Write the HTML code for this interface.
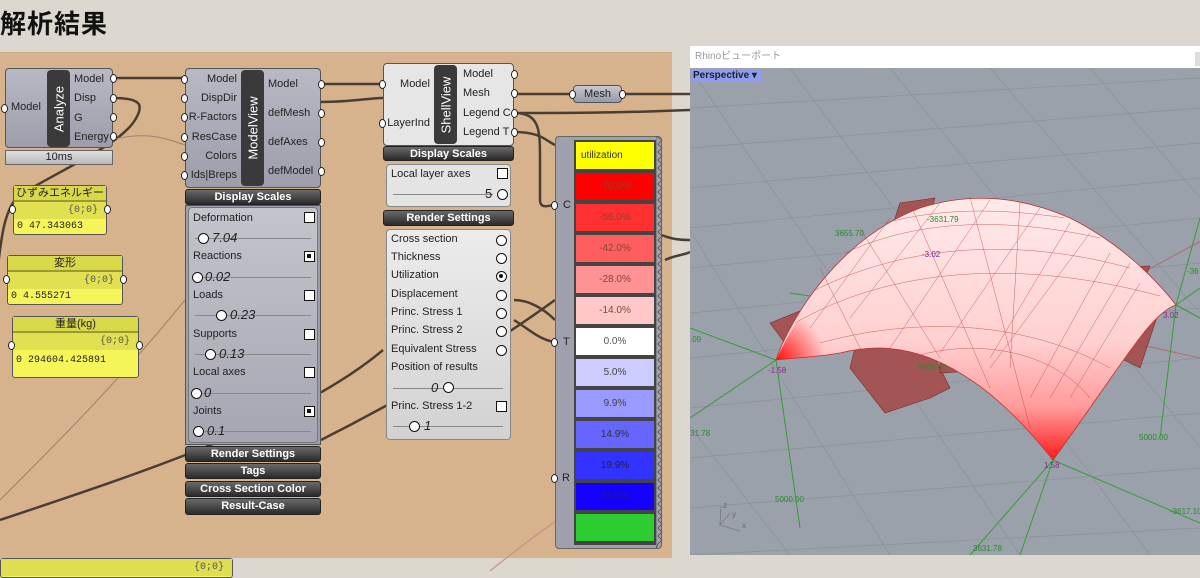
<!DOCTYPE html>
<html><head><meta charset="utf-8"><style>
*{box-sizing:border-box;margin:0;padding:0}
body{width:1200px;height:571px;overflow:hidden;background:#dcd8d0;font-family:"Liberation Sans","Noto Sans CJK JP",sans-serif;position:relative;font-size:11px;color:#222}
.a{position:absolute}
.node{position:absolute;background:linear-gradient(#b9b9c4,#9d9dab);border:1px solid #555;border-radius:4px}
.strip{position:absolute;background:#3a3a3a;border-radius:4px;color:#fff;font-size:13px}
.strip span{position:absolute;left:50%;top:50%;transform:translate(-50%,-50%) rotate(-90deg);white-space:nowrap}
.lbl{position:absolute;font-size:11px;white-space:nowrap}
.bar{position:absolute;background:linear-gradient(#6a6a6a,#2a2a2a);border:1px solid #222;border-radius:3px;color:#fff;font-weight:bold;font-size:11px;text-align:center;line-height:14px}
.pin{position:absolute;width:7px;height:9px;border:1.5px solid #222;background:#fff;border-radius:50%}
.chk{position:absolute;width:11px;height:11px;border:1.5px solid #111;background:#fff}
.chk.on::after{content:"";position:absolute;left:2px;top:2px;width:4px;height:4px;background:#111}
.rad{position:absolute;width:11px;height:11px;border:1.5px solid #111;border-radius:50%;background:#fff}
.rad.on::after{content:"";position:absolute;left:2px;top:2px;width:4px;height:4px;border-radius:50%;background:#111}
.sl{position:absolute;height:1px;background:#888}
.yp{position:absolute;border:1px solid #555;border-radius:3px;background:#f5f55a;font-family:"Liberation Mono",monospace}
.yp .h{background:#d8d84a;border-bottom:2px solid #9a9a30;text-align:center;font-family:"Liberation Sans","Noto Sans CJK JP",sans-serif;font-size:11px;height:16px;line-height:15px}
.yp .r1{background:#e0e050;height:17px;text-align:right;padding-right:8px;font-size:10px;line-height:17px;color:#555}
.yp .r2{font-size:10px;padding-left:3px;line-height:15px}
.sw{position:absolute;left:575px;width:80px;height:29px;border:1px solid #444;text-align:center;line-height:28px;font-size:10px;color:#843}
</style></head><body>
<div class="a" style="left:0;top:0;font-size:26px;font-weight:bold;color:#111;top:4px;letter-spacing:1px">解析結果</div>
<div class="a" style="left:0;top:52px;width:672px;height:506px;background:#d6b38c;border-top:1px solid #c9a884"></div>
<div class="a" style="left:0;top:558px;width:690px;height:13px;background:#dcd8d0"></div>

<svg class="a" style="left:0;top:0" width="690" height="571">
<g fill="none" stroke="#4a3e33" stroke-width="2.5">
<path d="M113 78 L185 78"/>
<path d="M113 98 C140 98 145 104 135 120 C120 145 60 170 20 195 C0 210 0 260 -5 290"/>
<path d="M321 84 L383 84"/>
<path d="M321 102 C350 102 370 98 383 98"/>
<path d="M514 94 L573 94"/>
<path d="M622 94 L690 94"/>
<path d="M514 113 C600 113 640 112 690 110"/>
<path d="M514 113 C540 113 540 130 540 160 L540 200 C540 210 550 205 555 205"/>
<path d="M514 132 C540 132 545 140 555 145"/>
<path d="M514 300 C530 300 545 310 555 320 M514 320 C530 330 540 340 555 342"/>
<path d="M0 520 C150 470 300 420 383 350 M321 440 C420 390 500 340 555 300"/>
<path d="M650 230 C670 240 680 240 690 240 M665 260 C675 255 685 255 690 252"/>
</g>
<g fill="none" stroke="#9a8470" stroke-width="1">
<path d="M110 140 C150 130 170 140 185 145"/>
<path d="M0 500 C60 440 120 380 185 300"/>
</g>
<path d="M490 571 C540 530 600 490 660 450" stroke="#c98f8a" stroke-width="1.2" fill="none"/>
</svg>

<!-- Analyze -->
<div class="node" style="left:5px;top:68px;width:108px;height:80px"></div>
<div class="strip" style="left:47px;top:70px;width:23px;height:77px"><span>Analyze</span></div>
<div class="lbl" style="left:11px;top:101px">Model</div>
<div class="lbl" style="left:74px;top:73px">Model</div>
<div class="lbl" style="left:74px;top:92px">Disp</div>
<div class="lbl" style="left:74px;top:112px">G</div>
<div class="lbl" style="left:74px;top:131px">Energy</div>
<div class="pin" style="left:1px;top:104px"></div>
<div class="pin" style="left:110px;top:74px"></div><div class="pin" style="left:110px;top:94px"></div><div class="pin" style="left:110px;top:113px"></div><div class="pin" style="left:110px;top:132px"></div>
<div class="a" style="left:5px;top:150px;width:108px;height:15px;background:linear-gradient(#e0e0e0,#b8b8b8);border:1px solid #666;text-align:center;font-size:11px;line-height:13px">10ms</div>

<!-- panels -->
<div class="yp" style="left:13px;top:185px;width:94px;height:50px"><div class="h">ひずみエネルギー</div><div class="r1">{0;0}</div><div class="r2">0 47.343063</div></div>
<div class="pin" style="left:9px;top:205px"></div><div class="pin" style="left:104px;top:205px"></div>
<div class="yp" style="left:7px;top:255px;width:116px;height:50px"><div class="h">変形</div><div class="r1">{0;0}</div><div class="r2">0 4.555271</div></div>
<div class="pin" style="left:3px;top:275px"></div><div class="pin" style="left:120px;top:275px"></div>
<div class="yp" style="left:12px;top:316px;width:127px;height:62px"><div class="h">重量(kg)</div><div class="r1">{0;0}</div><div class="r2" style="line-height:22px">0 294604.425891</div></div>
<div class="pin" style="left:8px;top:341px"></div><div class="pin" style="left:136px;top:341px"></div>
<div class="yp" style="left:0;top:558px;width:233px;height:20px"><div class="r1" style="background:#dede50">{0;0}</div></div>

<!-- ModelView -->
<div class="node" style="left:185px;top:68px;width:136px;height:120px"></div>
<div class="strip" style="left:241px;top:70px;width:23px;height:116px"><span>ModelView</span></div>
<div class="lbl" style="left:185px;top:73px;width:52px;text-align:right">Model</div>
<div class="lbl" style="left:185px;top:92px;width:52px;text-align:right">DispDir</div>
<div class="lbl" style="left:185px;top:111px;width:52px;text-align:right">R-Factors</div>
<div class="lbl" style="left:185px;top:131px;width:52px;text-align:right">ResCase</div>
<div class="lbl" style="left:185px;top:150px;width:52px;text-align:right">Colors</div>
<div class="lbl" style="left:185px;top:169px;width:52px;text-align:right">Ids|Breps</div>
<div class="lbl" style="left:268px;top:78px">Model</div>
<div class="lbl" style="left:268px;top:107px">defMesh</div>
<div class="lbl" style="left:268px;top:136px">defAxes</div>
<div class="lbl" style="left:268px;top:165px">defModel</div>
<div class="pin" style="left:181px;top:75px"></div><div class="pin" style="left:181px;top:94px"></div><div class="pin" style="left:181px;top:113px"></div><div class="pin" style="left:181px;top:133px"></div><div class="pin" style="left:181px;top:152px"></div><div class="pin" style="left:181px;top:171px"></div>
<div class="pin" style="left:318px;top:80px"></div><div class="pin" style="left:318px;top:109px"></div><div class="pin" style="left:318px;top:138px"></div><div class="pin" style="left:318px;top:167px"></div>
<div class="bar" style="left:185px;top:189px;width:136px;height:16px">Display Scales</div>
<div class="a" style="left:185px;top:205px;width:136px;height:240px;background:#9e9eab;border:1px solid #555"></div>
<div class="a" style="left:188px;top:207px;width:130px;height:236px;background:linear-gradient(#c4c4cc,#a6a6b2);border:1px solid #777;border-radius:4px"></div>
<div class="lbl" style="left:193px;top:212px">Deformation</div><div class="chk" style="left:304px;top:212px"></div>
<div class="sl" style="left:195px;top:238px;width:116px"></div><div class="rad" style="left:198px;top:233px"></div><div class="lbl" style="left:212px;top:230px;font-size:13px;font-style:italic">7.04</div>
<div class="lbl" style="left:193px;top:250px">Reactions</div><div class="chk on" style="left:304px;top:251px"></div>
<div class="sl" style="left:195px;top:277px;width:116px"></div><div class="rad" style="left:192px;top:272px"></div><div class="lbl" style="left:205px;top:269px;font-size:13px;font-style:italic">0.02</div>
<div class="lbl" style="left:193px;top:289px">Loads</div><div class="chk" style="left:304px;top:290px"></div>
<div class="sl" style="left:195px;top:315px;width:116px"></div><div class="rad" style="left:216px;top:310px"></div><div class="lbl" style="left:230px;top:307px;font-size:13px;font-style:italic">0.23</div>
<div class="lbl" style="left:193px;top:328px">Supports</div><div class="chk" style="left:304px;top:329px"></div>
<div class="sl" style="left:195px;top:354px;width:116px"></div><div class="rad" style="left:205px;top:349px"></div><div class="lbl" style="left:219px;top:346px;font-size:13px;font-style:italic">0.13</div>
<div class="lbl" style="left:193px;top:366px">Local axes</div><div class="chk" style="left:304px;top:367px"></div>
<div class="sl" style="left:195px;top:393px;width:116px"></div><div class="rad" style="left:191px;top:388px"></div><div class="lbl" style="left:204px;top:385px;font-size:13px;font-style:italic">0</div>
<div class="lbl" style="left:193px;top:405px">Joints</div><div class="chk on" style="left:304px;top:406px"></div>
<div class="sl" style="left:195px;top:431px;width:116px"></div><div class="rad" style="left:193px;top:426px"></div><div class="lbl" style="left:207px;top:423px;font-size:13px;font-style:italic">0.1</div>
<div class="bar" style="left:185px;top:446px;width:136px;height:16px">Render Settings</div>
<div class="bar" style="left:185px;top:463px;width:136px;height:16px">Tags</div>
<div class="bar" style="left:185px;top:481px;width:136px;height:16px">Cross Section Color</div>
<div class="bar" style="left:185px;top:498px;width:136px;height:17px">Result-Case</div>

<!-- ShellView -->
<div class="node" style="left:383px;top:63px;width:131px;height:83px;background:#e6e6e6"></div>
<div class="strip" style="left:434px;top:65px;width:23px;height:79px"><span>ShellView</span></div>
<div class="lbl" style="left:383px;top:78px;width:47px;text-align:right">Model</div>
<div class="lbl" style="left:383px;top:117px;width:47px;text-align:right">LayerInd</div>
<div class="lbl" style="left:463px;top:68px">Model</div>
<div class="lbl" style="left:463px;top:87px">Mesh</div>
<div class="lbl" style="left:463px;top:107px">Legend C</div>
<div class="lbl" style="left:463px;top:126px">Legend T</div>
<div class="pin" style="left:379px;top:80px"></div><div class="pin" style="left:379px;top:119px"></div>
<div class="pin" style="left:511px;top:70px"></div><div class="pin" style="left:511px;top:89px"></div><div class="pin" style="left:511px;top:109px"></div><div class="pin" style="left:511px;top:128px"></div>
<div class="bar" style="left:383px;top:146px;width:131px;height:15px">Display Scales</div>
<div class="a" style="left:386px;top:164px;width:125px;height:43px;background:#e4e4e4;border:1px solid #888;border-radius:4px"></div>
<div class="lbl" style="left:391px;top:168px">Local layer axes</div><div class="chk" style="left:497px;top:168px"></div>
<div class="sl" style="left:393px;top:194px;width:100px"></div><div class="lbl" style="left:485px;top:186px;font-size:13px">5</div><div class="rad" style="left:497px;top:189px"></div>
<div class="bar" style="left:383px;top:210px;width:131px;height:16px">Render Settings</div>
<div class="a" style="left:386px;top:229px;width:125px;height:211px;background:linear-gradient(#ececec,#d2d2d2);border:1px solid #888;border-radius:4px"></div>
<div class="lbl" style="left:391px;top:233px">Cross section</div><div class="rad" style="left:496px;top:235px"></div>
<div class="lbl" style="left:391px;top:251px">Thickness</div><div class="rad" style="left:496px;top:253px"></div>
<div class="lbl" style="left:391px;top:269px">Utilization</div><div class="rad on" style="left:496px;top:271px"></div>
<div class="lbl" style="left:391px;top:288px">Displacement</div><div class="rad" style="left:496px;top:290px"></div>
<div class="lbl" style="left:391px;top:306px">Princ. Stress 1</div><div class="rad" style="left:496px;top:308px"></div>
<div class="lbl" style="left:391px;top:324px">Princ. Stress 2</div><div class="rad" style="left:496px;top:326px"></div>
<div class="lbl" style="left:391px;top:343px">Equivalent Stress</div><div class="rad" style="left:496px;top:345px"></div>
<div class="lbl" style="left:391px;top:361px">Position of results</div>
<div class="sl" style="left:393px;top:388px;width:110px"></div><div class="lbl" style="left:431px;top:380px;font-size:13px;font-style:italic">0</div><div class="rad" style="left:443px;top:382px"></div>
<div class="lbl" style="left:391px;top:400px">Princ. Stress 1-2</div><div class="chk" style="left:496px;top:401px"></div>
<div class="sl" style="left:393px;top:426px;width:110px"></div><div class="rad" style="left:409px;top:421px"></div><div class="lbl" style="left:424px;top:418px;font-size:13px;font-style:italic">1</div>

<!-- Mesh param -->
<div class="a" style="left:573px;top:85px;width:49px;height:18px;background:linear-gradient(#c8c8d2,#9898a8);border:1px solid #555;border-radius:4px;text-align:center;line-height:16px">Mesh</div>
<div class="pin" style="left:569px;top:90px"></div><div class="pin" style="left:619px;top:90px"></div>

<!-- Legend -->
<div class="a" style="left:555px;top:136px;width:107px;height:413px;background:#a0a0ac;border:1px solid #666;border-radius:4px"></div>
<div class="a" style="left:574px;top:140px;width:84px;height:405px;background:#444"></div>
<div class="lbl" style="left:563px;top:199px">C</div><div class="lbl" style="left:563px;top:336px">T</div><div class="lbl" style="left:562px;top:472px">R</div>
<div class="pin" style="left:551px;top:201px"></div><div class="pin" style="left:551px;top:338px"></div><div class="pin" style="left:551px;top:474px"></div>
<div class="sw" style="top:141px;background:#ffff00;color:#333;text-align:left;padding-left:5px">utilization</div>
<div class="sw" style="top:172px;background:#ff0000">-70.0%</div>
<div class="sw" style="top:203px;background:#ff3030">-56.0%</div>
<div class="sw" style="top:234px;background:#ff5e5e">-42.0%</div>
<div class="sw" style="top:265px;background:#ff9292">-28.0%</div>
<div class="sw" style="top:296px;background:#ffc8c8">-14.0%</div>
<div class="sw" style="top:327px;background:#ffffff;color:#555">0.0%</div>
<div class="sw" style="top:358px;background:#ccccff;color:#444">5.0%</div>
<div class="sw" style="top:389px;background:#9999ff;color:#444">9.9%</div>
<div class="sw" style="top:420px;background:#6666ff;color:#333">14.9%</div>
<div class="sw" style="top:451px;background:#3333ff;color:#223">19.9%</div>
<div class="sw" style="top:482px;background:#1400ff;color:#202080">24.9%</div>
<div class="sw" style="top:513px;background:#2ecc33"></div>
<svg class="a" style="left:656px;top:136px" width="10" height="413"><path d="M0 0 L6 4 L2 8 L6 12 L2 16 L6 20 L2 24 L6 28 L2 32 L6 36 L2 40 L6 44 L2 48 L6 52 L2 56 L6 60 L2 64 L6 68 L2 72 L6 76 L2 80 L6 84 L2 88 L6 92 L2 96 L6 100 L2 104 L6 108 L2 112 L6 116 L2 120 L6 124 L2 128 L6 132 L2 136 L6 140 L2 144 L6 148 L2 152 L6 156 L2 160 L6 164 L2 168 L6 172 L2 176 L6 180 L2 184 L6 188 L2 192 L6 196 L2 200 L6 204 L2 208 L6 212 L2 216 L6 220 L2 224 L6 228 L2 232 L6 236 L2 240 L6 244 L2 248 L6 252 L2 256 L6 260 L2 264 L6 268 L2 272 L6 276 L2 280 L6 284 L2 288 L6 292 L2 296 L6 300 L2 304 L6 308 L2 312 L6 316 L2 320 L6 324 L2 328 L6 332 L2 336 L6 340 L2 344 L6 348 L2 352 L6 356 L2 360 L6 364 L2 368 L6 372 L2 376 L6 380 L2 384 L6 388 L2 392 L6 396 L2 400 L6 404 L2 408 L0 413 Z" fill="#a0a0ac" stroke="#555" stroke-width="0.8"/></svg>

<!-- Viewport -->
<div class="a" style="left:690px;top:46px;width:510px;height:22px;background:#fff;color:#999;font-size:10px;line-height:22px;padding-left:5px">Rhinoビューポート</div>
<div class="a" style="left:1195px;top:52px;width:5px;height:14px;background:#ddd"></div>
<svg class="a" style="left:690px;top:68px" width="510" height="487">
<rect width="510" height="487" fill="#9aa1aa"/>
<g stroke="#8a919a" stroke-width="0.7" fill="none">
<path d="M0 40 L510 10 M0 80 L510 40 M0 120 L510 75 M0 160 L510 110 M0 200 L510 150 M0 245 L510 195 M0 290 L510 240 M0 340 L510 290 M0 390 L510 345 M0 440 L510 400 M0 487 L510 460"/>
<path d="M-100 0 L200 487 M0 0 L330 487 M100 0 L460 487 M200 0 L560 440 M300 0 L600 350 M400 0 L620 260 M-200 100 L100 487"/>
</g>
<g stroke="#3a9a3a" stroke-width="1" fill="none">
<path d="M86 292 L110 460 M86 292 L0 350 M86 292 L0 260 M363 392 L330 487 M363 392 L510 455 M363 392 L280 487 M486 237 L470 370 M486 237 L510 220 M486 237 L510 250 M486 237 L510 150 M100 225 L200 240"/>
</g>
<path d="M535 160 L350 260 M330 250 L510 290" stroke="#b56060" stroke-width="0.8" fill="none"/>
<g fill="#a54848" fill-opacity="0.85" stroke="#7a2828" stroke-width="0.6">
<path d="M210 135 L245 130 L230 175 L195 180 Z"/>
<path d="M415 200 L460 198 L440 245 L400 240 Z"/>
<path d="M80 255 L125 237 L120 270 L95 275 Z"/>
<path d="M170 260 L245 290 L260 320 L240 330 L195 345 L160 300 Z"/>
<path d="M250 285 L320 255 L335 240 L300 270 L330 300 L250 305 Z"/>
<path d="M440 250 L470 240 L450 300 L430 290 Z"/>
</g>
<defs>
<linearGradient id="dg" x1="0" y1="0" x2="0" y2="1"><stop offset="0" stop-color="#ffeaea"/><stop offset="0.55" stop-color="#ffd0d0"/><stop offset="0.8" stop-color="#ff9a9a"/><stop offset="1" stop-color="#ff1a1a"/></linearGradient>
<radialGradient id="lc" cx="86" cy="292" r="50" gradientUnits="userSpaceOnUse"><stop offset="0" stop-color="#ff1010"/><stop offset="1" stop-color="#ff1010" stop-opacity="0"/></radialGradient>
</defs>
<path d="M86 292 C100 250 150 170 230 140 C280 124 330 128 380 150 C430 175 465 210 486 237 C460 245 430 300 363 392 C330 350 290 310 240 290 C200 275 170 280 150 285 C120 290 100 290 86 292 Z" fill="url(#dg)" stroke="#c03030" stroke-width="0.8"/>
<path d="M86 292 C100 262 115 240 130 228 L150 285 C120 290 100 290 86 292 Z" fill="url(#lc)"/>
<g stroke="#c04040" stroke-width="0.5" fill="none" opacity="0.8">
<path d="M105 255 C200 200 330 190 470 228 M125 222 C220 175 330 170 440 200 M155 185 C230 150 320 150 410 170 M195 155 C250 140 310 140 375 150 M130 275 C220 250 330 250 420 300 M220 290 C280 270 360 280 400 330"/>
<path d="M130 200 L180 300 M170 160 L250 290 M220 135 L300 320 M280 129 L340 360 M330 135 L320 300 M380 155 L300 290 M420 185 L340 330 M450 215 L380 330 M250 135 L160 250 M300 132 L200 280 M200 150 L120 260 M350 140 L250 285 M400 165 L300 300 M440 195 L360 330"/>
</g>
<g font-family="Liberation Sans" font-size="8">
<text x="145" y="168" fill="#2a8a2a">3655.70</text><text x="237" y="154" fill="#2a8a2a">-3631.79</text>
<text x="232" y="189" fill="#6a2a8a">-3.02</text><text x="228" y="302" fill="#2a8a2a">5000.00</text>
<text x="78" y="305" fill="#8a2a8a">-1.58</text><text x="354" y="400" fill="#8a2a8a">1.58</text>
<text x="473" y="250" fill="#8a2a8a">3.02</text><text x="85" y="434" fill="#2a8a2a">5000.00</text>
<text x="449" y="372" fill="#2a8a2a">5000.00</text><text x="283" y="483" fill="#2a8a2a">3631.78</text>
<text x="0" y="368" fill="#2a8a2a">31.78</text><text x="0" y="274" fill="#2a8a2a">.09</text>
<text x="480" y="446" fill="#2a8a2a">-3617.10</text><text x="497" y="206" fill="#2a8a2a">-36</text>
<text x="33" y="440" fill="#666">z</text><text x="42" y="449" fill="#666">y</text><text x="52" y="460" fill="#666">x</text>
</g>
<path d="M31 438 L30 457 L50 463 M30 457 L40 445" stroke="#777" stroke-width="0.8" fill="none"/>
</svg>
<div class="a" style="left:691px;top:69px;width:70px;height:13px;background:#8e9cf2;font-size:10px;font-weight:bold;color:#222;line-height:13px;padding-left:2px">Perspective ▾</div>
</body></html>
